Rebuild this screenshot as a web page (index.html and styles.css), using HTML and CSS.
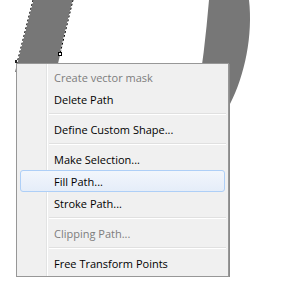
FILE: index.html
```html
<!DOCTYPE html>
<html lang="en">
<head>
    <meta charset="UTF-8">
    <title>Path Context Menu</title>
    <link rel="stylesheet" href="styles.css">
</head>
<body>
<svg class="canvas" width="300" height="300" viewBox="0 0 300 300">
    <!-- shape on the canvas behind the menu -->
    <polygon points="33,0 73,0 56,72 15,72" fill="#777"/>
    <path d="M209,0 L249,0 C253,35 245,75 230,104 L196,104 C202,70 206,35 209,0 Z" fill="#777"/>
    <!-- selected path outline -->
    <line x1="33" y1="0" x2="17" y2="63" stroke="#fff" stroke-width="1"/>
    <line x1="33" y1="0" x2="17" y2="63" stroke="#000" stroke-width="1" stroke-dasharray="2 2"/>
    <line x1="73" y1="0" x2="60" y2="54" stroke="#fff" stroke-width="1"/>
    <line x1="73" y1="0" x2="60" y2="54" stroke="#000" stroke-width="1" stroke-dasharray="2 2"/>
    <rect x="58.5" y="52.5" width="3" height="3" fill="#fff" stroke="#000" stroke-width="1"/>
    <rect x="15" y="60" width="2" height="3" fill="#222"/>
</svg>

<div class="menu">
    <div class="item disabled">Create vector mask</div>
    <div class="item">Delete Path</div>
    <div class="sep"></div>
    <div class="item">Define Custom Shape...</div>
    <div class="sep"></div>
    <div class="item">Make Selection...</div>
    <div class="item hover">Fill Path...</div>
    <div class="item">Stroke Path...</div>
    <div class="sep"></div>
    <div class="item disabled">Clipping Path...</div>
    <div class="sep"></div>
    <div class="item">Free Transform Points</div>
</div>
</body>
</html>
```

FILE: styles.css
```css
html, body {
    margin: 0;
    padding: 0;
    background: #fff;
    font-family: "Open Sans", "Noto Sans", sans-serif;
    font-size: 11px;
}

.canvas {
    position: absolute;
    left: 0;
    top: 0;
}

.menu {
    position: relative;
    margin: 63px 0 0 16px;
    width: 207px;
    padding: 2px;
    border: 1px solid #979797;
    box-shadow: 1px 1px 0 #8a8a8a;
    background: linear-gradient(to right, #f0f0f0 29px, #e2e3e3 29px, #e2e3e3 30px, #fff 30px, #fff 31px, #f0f0f0 31px);
}

.item {
    height: 20px;
    line-height: 21px;
    padding-left: 33px;
    margin: 0 1px;
    border: 1px solid transparent;
    border-radius: 3px;
    color: #000;
    white-space: nowrap;
}

.item.disabled {
    color: #7d7d7d;
}

.item.hover {
    border-color: #aecff7;
    background: linear-gradient(to bottom, #f2f6fc, #e5edf9);
}

.sep {
    height: 1px;
    margin: 3px 0 3px 30px;
    background: #e0e0e0;
    border-bottom: 1px solid #fff;
}
```
